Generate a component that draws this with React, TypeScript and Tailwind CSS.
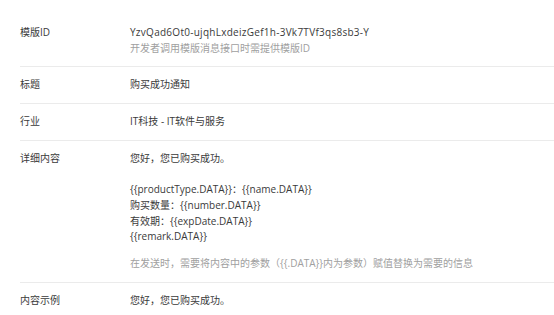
import React from "react";

type Row = { label: string; content: React.ReactNode };

const ROWS: Row[] = [
  {
    label: "模版ID",
    content: (
      <>
        <div className="tracking-[0.27px]">YzvQad6Ot0-ujqhLxdeizGef1h-3Vk7TVf3qs8sb3-Y</div>
        <div className="text-[#a0a0a0]">开发者调用模版消息接口时需提供模版ID</div>
      </>
    ),
  },
  { label: "标题", content: <div>购买成功通知</div> },
  { label: "行业", content: <div>IT科技 - IT软件与服务</div> },
  {
    label: "详细内容",
    content: (
      <>
        <div>您好，您已购买成功。</div>
        <div className="h-[15.7px]" />
        <div>{"{{productType.DATA}}：{{name.DATA}}"}</div>
        <div>{"购买数量：{{number.DATA}}"}</div>
        <div>{"有效期：{{expDate.DATA}}"}</div>
        <div>{"{{remark.DATA}}"}</div>
        <div className="mt-[11px] text-[#a0a0a0]">
          {"在发送时，需要将内容中的参数（{{.DATA}}内为参数）赋值替换为需要的信息"}
        </div>
      </>
    ),
  },
  { label: "内容示例", content: <div>您好，您已购买成功。</div> },
];

export default function App() {
  return (
    <div
      className="min-h-screen bg-white pt-[15px] pl-5 text-[10px] leading-[15.7px] text-[#3a3a3a]"
      style={{ fontFamily: '"Open Sans", "Noto Sans CJK SC", sans-serif' }}
    >
      {ROWS.map((r, i) => (
        <div
          key={r.label}
          className={`flex py-[10px] ${i < ROWS.length - 1 ? "border-b border-[#ebebeb]" : ""}`}
        >
          <div className="w-[110px] shrink-0">{r.label}</div>
          <div className="flex-1 min-w-0">{r.content}</div>
        </div>
      ))}
    </div>
  );
}
